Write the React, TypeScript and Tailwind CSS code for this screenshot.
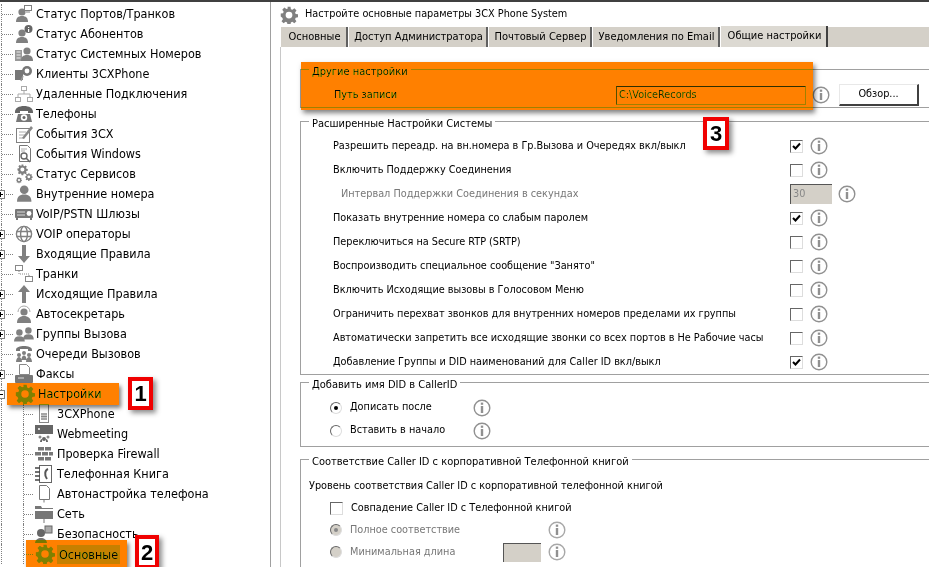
import React from 'react';

const G = '#808080';
const gearPath =
  'M10 1h4l.6 3.2 1.9.8 2.7-1.9 2.8 2.8-1.9 2.7.8 1.9 3.1.5v4l-3.1.6-.8 1.9 1.8 2.7-2.8 2.8-2.7-1.9-1.9.8-.5 3.1h-4l-.6-3.1-1.9-.8-2.7 1.9-2.8-2.8 1.9-2.7-.8-1.9L1 14v-4l3.1-.5.8-1.9L3 4.9l2.8-2.8 2.7 1.9 1.9-.8zM12 7.5a4.5 4.5 0 1 0 0 9 4.5 4.5 0 0 0 0-9z';

const Person = ({ x = 0, y = 0, s = 1 }: { x?: number; y?: number; s?: number }) => (
  <g transform={`translate(${x} ${y}) scale(${s})`} fill={G}>
    <circle cx="6" cy="4" r="3.6" />
    <path d="M0 14c0-4 2-6 6-6s6 2 6 6z" />
  </g>
);

const Gear = ({ color = G, size = 20 }: { color?: string; size?: number }) => (
  <svg width={size} height={size} viewBox="0 0 24 24" className="shrink-0">
    <path fill={color} fillRule="evenodd" d={gearPath} />
  </svg>
);

const icons: Record<string, React.ReactNode> = {
  ports: (
    <>
      <Person x={2} y={4} />
      <rect x="10.5" y="1.5" width="7" height="5" fill="#fff" stroke={G} />
      <path d="M12 8h4" stroke={G} />
    </>
  ),
  users: (
    <>
      <Person x={2} y={5} />
      <circle cx="14.5" cy="5" r="4" fill="#666" />
      <path d="M14 3h1.2v1H14zM14 5h1.2v3H14z" fill="#fff" />
    </>
  ),
  numbers: (
    <>
      <rect x="1" y="6" width="7" height="11" fill="#999" />
      <path d="M2.5 8h4M2.5 11h4M2.5 14h4" stroke="#eee" />
      <Person x={7} y={3} />
    </>
  ),
  clients: (
    <>
      <rect x="1" y="6" width="8" height="10" fill="#777" />
      <circle cx="13" cy="7" r="5" fill="#777" />
      <circle cx="13" cy="7" r="2.4" fill="#fff" />
      <path d="M9 12l-2 5" stroke="#999" strokeWidth="1.5" />
    </>
  ),
  remote: (
    <g fill="none" stroke="#aaa">
      <rect x="7.5" y="2.5" width="5" height="4" />
      <rect x="1.5" y="13.5" width="5" height="4" />
      <rect x="13.5" y="13.5" width="5" height="4" />
      <path d="M10 7v3M4 13v-3h12v3" />
    </g>
  ),
  phones: (
    <>
      <path d="M1 8c0-4 4-6 9-6s9 2 9 6v1h-5V7H6v2H1z" fill="#666" />
      <path d="M4 10h12l2 8H2z" fill="#777" />
      <circle cx="10" cy="13.5" r="3.2" fill="#fff" />
      <circle cx="10" cy="13.5" r="1.5" fill="#666" />
    </>
  ),
  events: (
    <>
      <rect x="2.5" y="4.5" width="13" height="14" fill="#fff" stroke={G} />
      <path d="M5 8h7M5 11h6M5 14h5" stroke="#aaa" />
      <path d="M8 14L17 2l2 2-9 11z" fill="#888" />
    </>
  ),
  windows: (
    <>
      <path d="M5.5 1.5h8l3 3v13h-11z" fill="#fff" stroke="#777" />
      <path d="M7 5h6M7 7h4" stroke="#aaa" />
      <circle cx="10" cy="12" r="3" fill="#fff" stroke="#666" strokeWidth="1.4" />
      <path d="M12 14l4 4" stroke="#666" strokeWidth="1.6" />
    </>
  ),
  services: (
    <g fill={G} fillRule="evenodd">
      <path transform="translate(3 0) scale(0.45)" d={gearPath} />
      <path transform="translate(11 9) scale(0.32)" d={gearPath} />
      <path transform="translate(2 13) scale(0.25)" d={gearPath} />
    </g>
  ),
  ext: <Person x={3} y={1} s={1.2} />,
  gateway: (
    <>
      <rect x="1" y="5" width="18" height="9" rx="1" fill="#777" />
      <path d="M3 8h8M3 11h8" stroke="#ddd" />
      <circle cx="15" cy="9.5" r="2.4" fill="#fff" />
      <path d="M3 14v2M17 14v2" stroke="#777" strokeWidth="2" />
    </>
  ),
  globe: (
    <g fill="none" stroke={G} strokeWidth="1.4">
      <circle cx="10" cy="10" r="7.6" />
      <ellipse cx="10" cy="10" rx="3.4" ry="7.6" />
      <path d="M2.5 7.5h15M2.5 12.5h15" />
    </g>
  ),
  down: <path d="M8 1h4v11h4l-6 7-6-7h4z" fill={G} />,
  trunks: (
    <g fill="none" stroke="#888">
      <rect x="1.5" y="1.5" width="7" height="5" fill="#fff" />
      <rect x="11.5" y="12.5" width="7" height="5" fill="#fff" />
      <path d="M5 7v3h10v2" strokeDasharray="1 1" />
    </g>
  ),
  up: <path d="M10 1l6 7h-4v11H8V8H4z" fill={G} />,
  attendant: (
    <>
      <path d="M4 8a6 6 0 0 1 12 0" fill="none" stroke="#aaa" />
      <circle cx="10" cy="8" r="3.6" fill={G} />
      <path d="M3 19c0-5 3-7 7-7s7 2 7 7z" fill={G} />
    </>
  ),
  groups: (
    <>
      <Person x={0} y={5} s={0.9} />
      <Person x={9} y={3} s={0.9} />
    </>
  ),
  queues: (
    <>
      <path d="M2 6c0-3 4-4 8-4s8 1 8 4v1h-4V5H6v2H2z" fill="#777" />
      <circle cx="10" cy="9" r="2" fill={G} />
      <circle cx="5" cy="11" r="2" fill={G} />
      <circle cx="15" cy="11" r="2" fill={G} />
      <path d="M2 18c0-3 1.500-5 3-5s3 2 3 5zM12 18c0-3 1.500-5 3-5s3 2 3 5zM7.500 16c0-3 1-4.500 2.500-4.500s2.500 1.500 2.500 4.500z" fill={G} />
    </>
  ),
  fax: (
    <>
      <path d="M5.500 0.500h7l3 3v7h-10z" fill="#fff" stroke="#888" />
      <rect x="1" y="11" width="18" height="8" rx="1" fill="#777" />
      <path d="M4 14h6" stroke="#ddd" />
    </>
  ),
  phone3cx: (
    <>
      <rect x="5.500" y="0.500" width="9" height="18" fill="#fff" stroke="#888" />
      <path d="M7 10h6M7 12.500h6M7 15h6M8 9v7M10 9v7M12 9v7" stroke="#888" />
    </>
  ),
  webmeeting: (
    <>
      <rect x="1" y="1" width="18" height="9" fill="#666" />
      <circle cx="5" cy="5" r="1" fill="#fff" />
      <circle cx="10" cy="15" r="2" fill="#666" />
      <path d="M6 18c0-2 1-3 2-3v3zM14 18c0-2-1-3-2-3v3z" fill="#666" />
      <circle cx="6" cy="13" r="1.500" fill="#888" />
      <circle cx="14" cy="13" r="1.500" fill="#888" />
    </>
  ),
  firewall: (
    <g fill="#777">
      <rect x="4" y="3" width="6" height="3.500" />
      <rect x="11" y="3" width="6" height="3.500" />
      <rect x="1" y="8" width="6" height="3.500" />
      <rect x="8" y="8" width="6" height="3.500" />
      <rect x="15" y="8" width="4" height="3.500" />
      <rect x="4" y="13" width="6" height="3.500" />
      <rect x="11" y="13" width="6" height="3.500" />
    </g>
  ),
  book: (
    <>
      <rect x="5.500" y="1.500" width="12" height="17" fill="#fff" stroke="#666" />
      <path d="M1 4h5M1 8h5M1 12h5M1 16h5" stroke="#444" strokeWidth="1.400" />
      <path d="M14 5c-3 1-4 6-1 10" fill="none" stroke="#555" strokeWidth="2" />
    </>
  ),
  provision: <path d="M5.500 1.500h7l3 3v11h-10zM10 15.500v3" fill="#fff" stroke="#777" />,
  network: (
    <>
      <path d="M1 2h6l1 2h11v1H1z" fill="#777" />
      <rect x="1" y="7" width="18" height="8" fill="#777" />
      <path d="M10 15v4" stroke="#777" />
    </>
  ),
  security: (
    <>
      <circle cx="7" cy="9" r="4" fill="#666" />
      <path d="M1 19c0-3 3-5 6-5s6 2 6 5z" fill="#777" />
      <rect x="11" y="2" width="7" height="7" fill="#aaa" stroke="#666" />
    </>
  ),
};

type Item = { label: string; icon: string; plus?: boolean; minus?: boolean };

const topItems: Item[] = [
  { label: 'Статус Портов/Транков', icon: 'ports' },
  { label: 'Статус Абонентов', icon: 'users' },
  { label: 'Статус Системных Номеров', icon: 'numbers' },
  { label: 'Клиенты 3CXPhone', icon: 'clients' },
  { label: 'Удаленные Подключения', icon: 'remote' },
  { label: 'Телефоны', icon: 'phones' },
  { label: 'События 3CX', icon: 'events' },
  { label: 'События Windows', icon: 'windows' },
  { label: 'Статус Сервисов', icon: 'services' },
  { label: 'Внутренние номера', icon: 'ext', plus: true },
  { label: 'VoIP/PSTN Шлюзы', icon: 'gateway' },
  { label: 'VOIP операторы', icon: 'globe', plus: true },
  { label: 'Входящие Правила', icon: 'down', plus: true },
  { label: 'Транки', icon: 'trunks' },
  { label: 'Исходящие Правила', icon: 'up', plus: true },
  { label: 'Автосекретарь', icon: 'attendant', plus: true },
  { label: 'Группы Вызова', icon: 'groups', plus: true },
  { label: 'Очереди Вызовов', icon: 'queues' },
  { label: 'Факсы', icon: 'fax', plus: true },
];

const subItems: Item[] = [
  { label: '3CXPhone', icon: 'phone3cx' },
  { label: 'Webmeeting', icon: 'webmeeting' },
  { label: 'Проверка Firewall', icon: 'firewall' },
  { label: 'Телефонная Книга', icon: 'book' },
  { label: 'Автонастройка телефона', icon: 'provision' },
  { label: 'Сеть', icon: 'network' },
  { label: 'Безопасность', icon: 'security' },
];

const Expander = ({ minus }: { minus?: boolean }) => (
  <span className="absolute left-[-4px] top-[6px] w-[9px] h-[9px] border border-[#808080] bg-white">
    <span className="absolute left-[1px] top-[3px] w-[5px] h-px bg-black" />
    {!minus && <span className="absolute left-[3px] top-[1px] w-px h-[5px] bg-black" />}
  </span>
);

const TreeRow = ({ item }: { item: Item }) => (
  <div className="relative h-5 flex items-center pl-[2px]">
    <span className="absolute left-[1px] top-0 h-5 border-l border-dotted border-[#808080]" />
    <span className="w-[11px] border-t border-dotted border-[#808080] shrink-0" />
    {(item.plus || item.minus) && <Expander minus={item.minus} />}
    <svg width="20" height="20" viewBox="0 0 20 20" className="shrink-0 ml-[1px]">
      {icons[item.icon]}
    </svg>
    <span className="ml-[2px] whitespace-nowrap">{item.label}</span>
  </div>
);

const SubRow = ({ item, selected }: { item?: Item; selected?: boolean }) => (
  <div className="relative h-5 flex items-center pl-[2px]">
    <span className="absolute left-[1px] top-0 h-5 border-l border-dotted border-[#808080]" />
    <span className="absolute left-[23px] top-0 h-5 border-l border-dotted border-[#808080]" />
    <span className="ml-[22px] w-[9px] border-t border-dotted border-[#808080] shrink-0" />
    {item ? (
      <>
        <svg width="20" height="20" viewBox="0 0 20 20" className="shrink-0 ml-[1px]">
          {icons[item.icon]}
        </svg>
        <span className="ml-[3px] whitespace-nowrap">{item.label}</span>
      </>
    ) : (
      <>
        <span className="ml-[2px] w-5 flex justify-center">
          <Gear size={20} />
        </span>
        <span className={`ml-[2px] px-[2px] whitespace-nowrap leading-[19px] ${selected ? 'bg-[#c6c6c6]' : ''}`}>
          Основные
        </span>
      </>
    )}
  </div>
);

const Info = ({ muted }: { muted?: boolean }) => (
  <svg width="18" height="18" viewBox="0 0 18 18" className="shrink-0">
    <circle cx="9" cy="9" r="7.800" fill="#fff" stroke={muted ? '#a8a8a8' : '#909090'} strokeWidth="1.400" />
    <rect x="7.800" y="3.600" width="2.400" height="2.200" fill="#909090" />
    <rect x="7.800" y="7" width="2.400" height="7" fill="#909090" />
  </svg>
);

const Checkbox = ({ checked }: { checked?: boolean }) => (
  <span className="w-[13px] h-[13px] border border-t-[#666] border-l-[#666] border-r-[#ddd] border-b-[#ddd] bg-white flex items-center justify-center shrink-0">
    {checked && (
      <svg width="9" height="9" viewBox="0 0 9 9">
        <path d="M1 4l2.500 2.500L8 1.500" fill="none" stroke="#000" strokeWidth="2" />
      </svg>
    )}
  </span>
);

const Radio = ({ checked, disabled }: { checked?: boolean; disabled?: boolean }) => (
  <span
    className={`w-3 h-3 rounded-full border border-t-[#666] border-l-[#666] border-r-[#ddd] border-b-[#ddd] flex items-center justify-center shrink-0 ${
      disabled ? 'bg-[#d4d0c8]' : 'bg-white'
    }`}
  >
    {checked && <span className={`w-1 h-1 rounded-full ${disabled ? 'bg-[#888]' : 'bg-black'}`} />}
  </span>
);

const Legend = ({ children }: { children: React.ReactNode }) => (
  <legend className="ml-[8px] px-[3px] h-[14px] leading-[20px] text-[11px] whitespace-nowrap">{children}</legend>
);

const optionRows = [
  { label: 'Разрешить переадр. на вн.номера в Гр.Вызова и Очередях вкл/выкл', checked: true },
  { label: 'Включить Поддержку Соединения' },
  { label: 'interval' },
  { label: 'Показать внутренние номера со слабым паролем', checked: true },
  { label: 'Переключиться на Secure RTP (SRTP)' },
  { label: 'Воспроизводить специальное сообщение "Занято"' },
  { label: 'Включить Исходящие вызовы в Голосовом Меню' },
  { label: 'Ограничить перехват звонков для внутренних номеров пределами их группы' },
  { label: 'Автоматически запретить все исходящие звонки со всех портов в Не Рабочие часы' },
  { label: 'Добавление Группы и DID наименований для Caller ID вкл/выкл', checked: true },
];

const Badge = ({ n, className }: { n: number; className: string }) => (
  <div
    className={`absolute bg-white border-[4px] border-[#f00000] flex items-center justify-center text-[22px] font-bold text-black [font-family:'Liberation_Sans',sans-serif] shadow-[3px_3px_5px_rgba(0,0,0,0.45)] ${className}`}
  >
    {n}
  </div>
);

export default function App() {
  return (
    <div className="relative w-[929px] h-[567px] overflow-hidden bg-white text-black border-t-2 border-[#404040] [font-family:'DejaVu_Sans_Condensed','DejaVu_Sans',sans-serif] flex">
      <aside className="w-[271px] shrink-0 border-r border-[#a0a0a0] pt-[2px] text-[12.5px] overflow-hidden">
        {topItems.map((item) => (
          <TreeRow key={item.label} item={item} />
        ))}
        <div className="relative h-5 flex items-center pl-[2px]">
          <span className="absolute left-[1px] top-0 h-5 border-l border-dotted border-[#808080]" />
          <Expander minus />
          <span className="ml-[13px]">
            <Gear size={20} />
          </span>
          <span className="ml-[3px]">Настройки</span>
        </div>
        {subItems.map((item) => (
          <SubRow key={item.label} item={item} />
        ))}
        <SubRow selected />
      </aside>

      <main className="flex-1 min-w-0 pl-[9px] text-[10.8px]">
        <div className="h-[25px] flex items-center gap-[7px]">
          <Gear size={18} />
          <span className="whitespace-nowrap">Настройте основные параметры 3CX Phone System</span>
        </div>
        <div className="h-[20px] bg-[#d4d0c8] flex items-end text-[11px]">
          {[
            ['Основные', 'w-[68px]'],
            ['Доступ Администратора', 'w-[140px]'],
            ['Почтовый Сервер', 'w-[104px]'],
            ['Уведомления по Email', 'w-[128px]'],
          ].map(([t, w]) => (
            <div
              key={t}
              className={`${w} h-[20px] pl-[2px] border-r-2 border-[#606060] border-l border-l-white flex items-center justify-center whitespace-nowrap`}
            >
              {t}
            </div>
          ))}
          <div className="w-[108px] h-[21px] pl-[2px] border-r-2 border-[#404040] border-l border-l-white flex items-center justify-center whitespace-nowrap bg-[#dcd9d2]">
            Общие настройки
          </div>
        </div>

        <div className="h-[520px] border-l border-[#c8c8c8] pl-[19px] pt-[15px] w-[700px]">
          <fieldset className="h-[46px] border border-[#a0a0a0] w-[700px]">
            <Legend>Другие настройки</Legend>
            <div className="flex items-center h-[24px] mt-[7px]">
              <span className="ml-[33px] w-[282px]">Путь записи</span>
              <div className="w-[190px] h-[19px] border border-t-[#303030] border-l-[#505050] border-r-[#a0a0a0] border-b-[#a0a0a0] flex items-center pl-[2px] text-[#202020]">
                C:\VoiceRecords
              </div>
              <span className="ml-[6px]">
                <Info />
              </span>
              <button className="ml-[9px] w-[80px] h-[22px] bg-white border-r-2 border-b-2 border-[#404040] border-t border-l border-t-[#e8e8e8] border-l-[#e8e8e8]">
                Обзор...
              </button>
            </div>
          </fieldset>

          <fieldset className="mt-[6px] h-[261px] border border-[#a0a0a0] w-[700px]">
            <Legend>Расширенные Настройки Системы</Legend>
            <div className="pt-[6px]">
              {optionRows.map((row) =>
                row.label === 'interval' ? (
                  <div key={row.label} className="h-6 flex items-center">
                    <span className="ml-[40px] w-[449px] pt-px text-[#777] whitespace-nowrap">
                      Интервал Поддержки Соединения в секундах
                    </span>
                    <span className="w-[42px] h-[20px] bg-[#d4d0c8] border-t border-l border-[#555] pl-[2px] text-[#888] flex items-center">
                      30
                    </span>
                    <span className="ml-[6px]">
                      <Info />
                    </span>
                  </div>
                ) : (
                  <div key={row.label} className="h-6 flex items-center">
                    <span className="ml-[32px] w-[457px] pt-px whitespace-nowrap">{row.label}</span>
                    <Checkbox checked={row.checked} />
                    <span className="ml-[7px]">
                      <Info />
                    </span>
                  </div>
                ),
              )}
            </div>
          </fieldset>

          <fieldset className="h-[72px] border border-[#a0a0a0] w-[700px]">
            <Legend>Добавить имя DID в CallerID</Legend>
            <div className="pt-[7px] pl-[29px]">
              {[
                ['Дописать после', true],
                ['Вставить в начало', false],
              ].map(([t, on]) => (
                <div key={String(t)} className="h-[23px] flex items-center">
                  <Radio checked={Boolean(on)} />
                  <span className="ml-[8px] w-[123px] whitespace-nowrap">{t}</span>
                  <Info />
                </div>
              ))}
            </div>
          </fieldset>

          <fieldset className="mt-[5px] h-[200px] border border-[#a0a0a0] w-[700px]">
            <Legend>Соответствие Caller ID с корпоративной Телефонной книгой</Legend>
            <div className="pl-[8px] pt-[12px] h-[27px] whitespace-nowrap">
              Уровень соответствия Caller ID с корпоративной телефонной книгой
            </div>
            <div className="pl-[29px] pt-[5px]">
              <div className="h-[21px] flex items-center">
                <Checkbox />
                <span className="ml-[8px] whitespace-nowrap">Совпадение Caller ID с Телефонной книгой</span>
              </div>
              <div className="h-[22px] flex items-center text-[#777]">
                <Radio checked disabled />
                <span className="ml-[8px] w-[198px] whitespace-nowrap">Полное соответствие</span>
                <Info muted />
              </div>
              <div className="h-[22px] flex items-center text-[#777]">
                <Radio disabled />
                <span className="ml-[8px] w-[153px] whitespace-nowrap">Минимальная длина</span>
                <span className="w-[38px] h-[19px] bg-[#d4d0c8] border-t border-l border-[#555] mr-[7px]" />
                <Info muted />
              </div>
            </div>
          </fieldset>
        </div>
      </main>

      <div className="absolute left-[7px] top-[381px] w-[112px] h-[22px] bg-[#ff8000] mix-blend-darken shadow-[2px_3px_4px_rgba(0,0,0,0.5)]" />
      <div className="absolute left-[26px] top-[538px] w-[101px] h-[27px] bg-[#ff8000] mix-blend-darken shadow-[2px_3px_4px_rgba(0,0,0,0.5)]" />
      <div className="absolute left-[301px] top-[60px] w-[512px] h-[48px] bg-[#ff8000] mix-blend-darken shadow-[2px_3px_5px_rgba(0,0,0,0.5)]" />

      <Badge n={1} className="left-[128px] top-[375px] w-[25px] h-[33px]" />
      <Badge n={2} className="left-[135px] top-[533px] w-[24px] h-[34px]" />
      <Badge n={3} className="left-[703px] top-[115px] w-[26px] h-[33px]" />
    </div>
  );
}
